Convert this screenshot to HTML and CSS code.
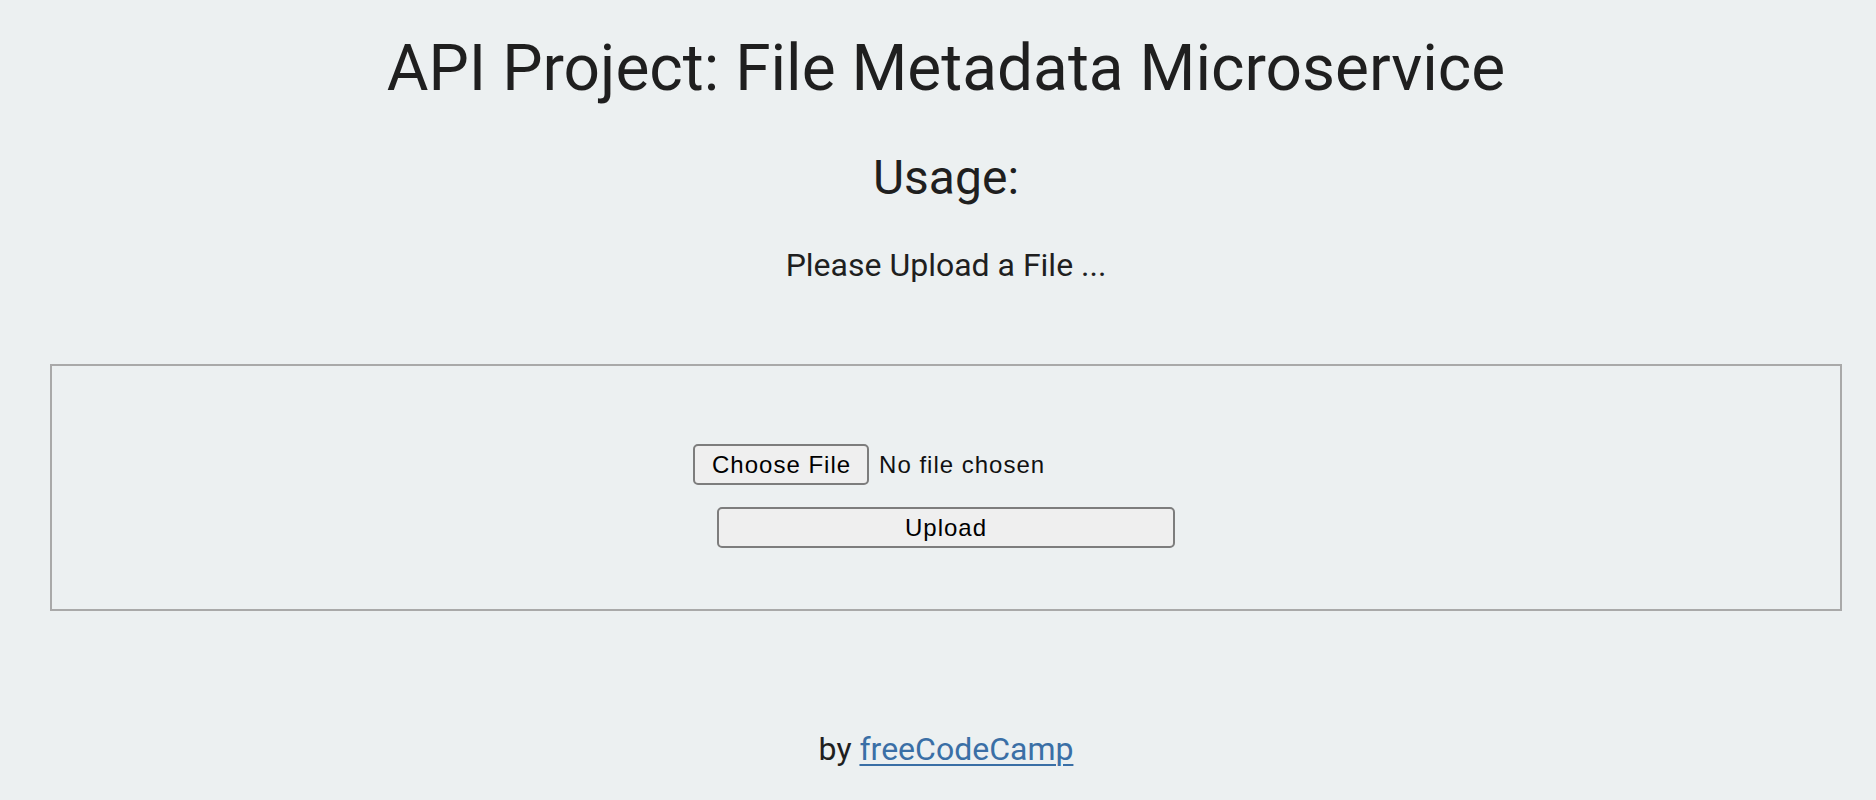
FILE: index.html
```html
<!DOCTYPE html>
<html lang="en">
<head>
<meta charset="utf-8">
<title>File Metadata Microservice</title>
<link rel="stylesheet" href="styles.css">
</head>
<body>
  <div class="page">
    <h1 class="title">API Project: File Metadata Microservice</h1>
    <h2 class="subtitle">Usage:</h2>
    <p class="lead">Please Upload a File ...</p>
    <div class="upload-box">
      <form class="upload-form" enctype="multipart/form-data" method="POST" action="/api/fileanalyse">
        <div class="file-row">
          <input class="file-input" type="file" name="upfile">
        </div>
        <input class="submit-btn" type="submit" value="Upload">
      </form>
    </div>
    <footer class="footer">
      <p class="credit">by <a class="credit-link" href="#">freeCodeCamp</a></p>
    </footer>
  </div>
</body>
</html>
```

FILE: styles.css
```css
html, body {
  margin: 0;
  padding: 0;
  background: #ecf0f1;
}

body {
  font-family: Roboto, "Liberation Sans", sans-serif;
  color: #1f1f1f;
}

.page {
  padding: 31px 34px 0 50px;
  text-align: center;
}

.title {
  margin: 0;
  font-size: 64px;
  font-weight: 400;
  line-height: normal;
}

.subtitle {
  margin: 43px 0 0;
  font-size: 48px;
  font-weight: 400;
  line-height: normal;
}

.lead {
  margin: 40px 0 0;
  font-size: 32px;
  line-height: normal;
}

.upload-box {
  margin-top: 80px;
  border: 2px solid #a9a9a9;
  padding: 78px 0 61px;
}

.upload-form {
  display: flex;
  flex-direction: column;
  align-items: center;
  gap: 22px;
}

.file-row {
  width: 506px;
  text-align: left;
  display: flex;
}

.file-input {
  font-family: "Liberation Sans", Arial, sans-serif;
  font-size: 24px;
  letter-spacing: 1px;
  color: #111;
  width: 506px;
  margin: 0;
  padding: 0;
}

.file-input::file-selector-button {
  font-family: "Liberation Sans", Arial, sans-serif;
  font-size: 24px;
  letter-spacing: 1px;
  color: #000;
  background: #efefef;
  border: 2px solid #7d7d7d;
  border-radius: 5px;
  height: 41px;
  padding: 0 16px 0 17px;
  margin: 0 10px 0 0;
}

.submit-btn {
  font-family: "Liberation Sans", Arial, sans-serif;
  font-size: 24px;
  letter-spacing: 1px;
  color: #000;
  background: #efefef;
  border: 2px solid #7d7d7d;
  border-radius: 5px;
  width: 458px;
  height: 41px;
  margin: 0;
  padding: 0;
}

.footer {
  margin-top: 119px;
}

.credit {
  margin: 0;
  font-size: 32px;
  line-height: normal;
}

.credit-link {
  color: #3a6fa6;
  text-decoration: underline;
  text-decoration-thickness: 2px;
  text-underline-offset: 4px;
}
```
